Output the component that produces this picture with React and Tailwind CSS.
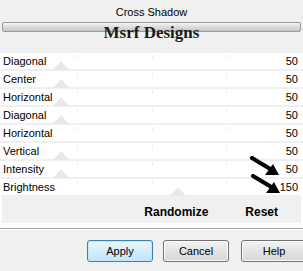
import React from "react";

const rows = [
  { label: "Diagonal", value: "50", thumb: 61 },
  { label: "Center", value: "50", thumb: 61 },
  { label: "Horizontal", value: "50", thumb: 61 },
  { label: "Diagonal", value: "50", thumb: 61 },
  { label: "Horizontal", value: "50", thumb: null },
  { label: "Vertical", value: "50", thumb: 61 },
  { label: "Intensity", value: "50", thumb: 61 },
  { label: "Brightness", value: "150", thumb: 178 },
];

const Arrow = ({ className }) => (
  <svg className={className} width="32" height="22" viewBox="0 0 32 22">
    <line x1="2" y1="2" x2="22" y2="14" stroke="#000" strokeWidth="4" strokeLinecap="round" />
    <polygon points="29,19 15,19 23,8" fill="#000" />
  </svg>
);

const Button = ({ children, primary }) => (
  <button
    className={`h-[22px] w-[66px] shrink-0 rounded-[3px] border text-[11px] text-black ${
      primary
        ? "border-[#3c7fb1] bg-gradient-to-b from-[#eaf6fd] to-[#bee6fd] shadow-[inset_0_0_0_1px_#c6e7fa]"
        : "border-[#707070] bg-gradient-to-b from-[#f2f2f2] to-[#d6d6d6] shadow-[inset_0_0_0_1px_#fcfcfc]"
    }`}
  >
    {children}
  </button>
);

export default function App() {
  return (
    <div className="w-[303px] h-[271px] overflow-hidden bg-[#f0f0f0] font-['Liberation_Sans',Arial,sans-serif] text-black">
      {/* Title */}
      <div className="h-[22px] pt-[6px] text-center text-[11px] leading-[13px]">Cross Shadow</div>

      {/* Bar */}
      <div className="mx-[2px] h-[10px] rounded-[2px] border border-[#9a9a9a] bg-gradient-to-b from-[#f4f4f4] via-[#dcdcdc] to-[#c6c6c6]" />

      {/* Brand */}
      <div className="relative mt-[-8px] h-[29px] text-center font-['Liberation_Serif',serif] text-[17px] font-bold leading-[18px] text-[#1a1a1a]">
        Msrf Designs
      </div>

      {/* Rows */}
      <div className="relative bg-white">
        {rows.map((row, i) => (
          <div key={i} className="relative">
            <div className="flex h-[16px] items-center justify-between bg-white pl-[3px] pr-[5px] text-[11px]">
              <span>{row.label}</span>
              <span>{row.value}</span>
            </div>
            {i < rows.length - 1 && <div className="h-[2px] bg-[#f0f0f0]" />}
            <div className="absolute left-[77px] top-[2px] h-[3px] w-px bg-[#ebebeb]" />
            <div className="absolute left-[152px] top-[2px] h-[3px] w-px bg-[#ebebeb]" />
            <div className="absolute left-[226px] top-[2px] h-[3px] w-px bg-[#ebebeb]" />
          </div>
        ))}

        {/* Randomize / Reset */}
        <div className="px-[2px] pb-[5px]">
          <div className="flex h-[28px] items-center justify-end gap-[37px] bg-[#f0f0f0] pr-[23px] pt-[6px] text-[12px] font-bold">
            <span>Randomize</span>
            <span>Reset</span>
          </div>
        </div>

        {rows.map((row, i) =>
          row.thumb ? (
            <div
              key={"t" + i}
              className="absolute h-0 w-0 border-x-[8px] border-b-[9px] border-x-transparent border-b-[#e8e8e8]"
              style={{ left: row.thumb - 8, top: i * 18 + 8 }}
            />
          ) : null
        )}

        <Arrow className="absolute left-[250px] top-[103px]" />
        <Arrow className="absolute left-[251px] top-[121px]" />
      </div>

      {/* Separator */}
      <div className="h-px bg-[#a0a0a0]" />
      <div className="h-px bg-white" />

      {/* Buttons */}
      <div className="flex pl-[87px] pt-[10px]">
        <Button primary>Apply</Button>
        <div className="w-[10px] shrink-0" />
        <Button>Cancel</Button>
        <div className="w-[12px] shrink-0" />
        <Button>Help</Button>
      </div>
    </div>
  );
}
